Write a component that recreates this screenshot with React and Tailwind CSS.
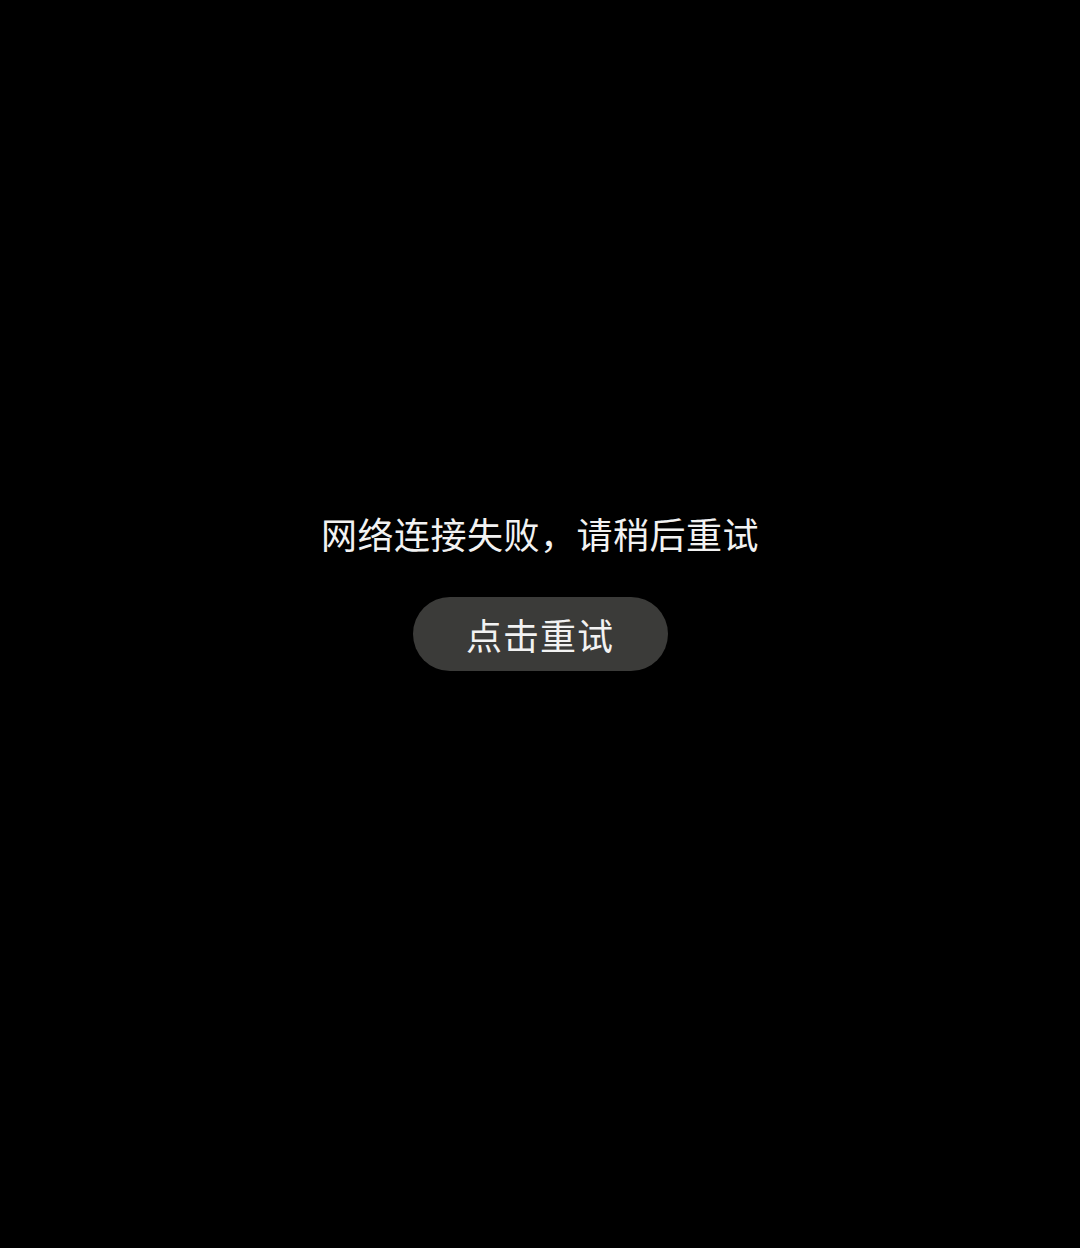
export default function App() {
  return (
    <div
      className="w-[1080px] h-[1248px] bg-black flex flex-col items-center pt-[510px]"
      style={{ fontFamily: '"Noto Sans CJK SC", "Noto Sans", sans-serif' }}
    >
      {/* Error message */}
      <p className="text-[36px] leading-[46px] text-[#f2f2f2] tracking-[0.5px]">
        网络连接失败，请稍后重试
      </p>

      {/* Retry button */}
      <button className="mt-[41px] w-[255px] h-[74px] rounded-full bg-[#3b3b39] text-[#f2f2f2] text-[36px] leading-none flex items-center justify-center tracking-[1px]">
        点击重试
      </button>
    </div>
  );
}
